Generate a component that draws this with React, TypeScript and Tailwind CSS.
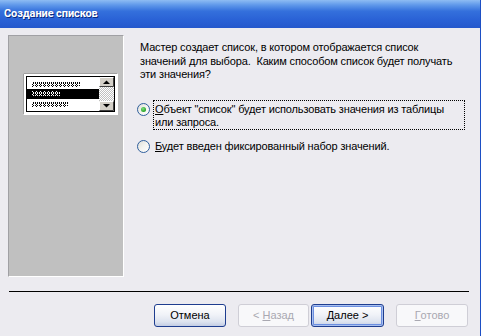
import React from "react";

function Radio({ checked }: { checked?: boolean }) {
  return (
    <svg width="13" height="13" viewBox="0 0 13 13" className="shrink-0">
      <defs>
        <linearGradient id={checked ? "rg1" : "rg2"} x1="0" y1="0" x2="1" y2="1">
          <stop offset="0" stopColor="#dcdcd6" />
          <stop offset="0.5" stopColor="#f4f4f0" />
          <stop offset="1" stopColor="#ffffff" />
        </linearGradient>
        <radialGradient id={checked ? "dg1" : "dg2"} cx="0.4" cy="0.35" r="0.7">
          <stop offset="0" stopColor="#7fe07f" />
          <stop offset="1" stopColor="#1a9a1a" />
        </radialGradient>
      </defs>
      <circle cx="6.5" cy="6.5" r="6" fill={`url(#${checked ? "rg1" : "rg2"})`} stroke="#2f5e9c" strokeWidth="1" />
      {checked && <circle cx="6.5" cy="6.5" r="2.5" fill={`url(#dg1)`} />}
    </svg>
  );
}

function ListPic() {
  return (
    <svg width="95" height="42" viewBox="0 0 95 42" className="block">
      <defs>
        <pattern id="pb" patternUnits="userSpaceOnUse" width="4" height="5">
          <rect x="0" y="0" width="1" height="1" fill="#000" />
          <rect x="2" y="0" width="1" height="1" fill="#000" />
          <rect x="1" y="1" width="1" height="1" fill="#000" />
          <rect x="0" y="2" width="1" height="1" fill="#000" />
          <rect x="2" y="2" width="1" height="1" fill="#000" />
          <rect x="1" y="3" width="1" height="1" fill="#000" />
          <rect x="0" y="4" width="1" height="1" fill="#000" />
          <rect x="2" y="4" width="1" height="1" fill="#000" />
        </pattern>
        <pattern id="pw" patternUnits="userSpaceOnUse" width="4" height="5">
          <rect x="0" y="0" width="1" height="1" fill="#fff" />
          <rect x="2" y="0" width="1" height="1" fill="#fff" />
          <rect x="1" y="1" width="1" height="1" fill="#fff" />
          <rect x="0" y="2" width="1" height="1" fill="#fff" />
          <rect x="2" y="2" width="1" height="1" fill="#fff" />
          <rect x="1" y="3" width="1" height="1" fill="#fff" />
          <rect x="0" y="4" width="1" height="1" fill="#fff" />
          <rect x="2" y="4" width="1" height="1" fill="#fff" />
        </pattern>
        <pattern id="chk" patternUnits="userSpaceOnUse" width="2" height="2">
          <rect x="0" y="0" width="2" height="2" fill="#c0c0c0" />
          <rect x="0" y="0" width="1" height="1" fill="#fff" />
          <rect x="1" y="1" width="1" height="1" fill="#fff" />
        </pattern>
      </defs>
      <rect x="0" y="0" width="95" height="42" fill="#fff" />
      <path d="M0.5 41.5 V0.5 H94.5" stroke="#a0a0a0" fill="none" />
      <rect x="3.5" y="3.5" width="88" height="35" fill="#fff" stroke="#000" />
      <rect x="9" y="9" width="48" height="5" fill="url(#pb)" />
      <rect x="4" y="16" width="72" height="10" fill="#000" />
      <rect x="9" y="18" width="28" height="5" fill="url(#pw)" />
      <rect x="9" y="29" width="36" height="5" fill="url(#pb)" />
      <rect x="76" y="14" width="15" height="14" fill="url(#chk)" />
      <g>
        <rect x="76" y="4" width="15" height="10" fill="#d4d0c8" />
        <path d="M76.5 13.5 V4.5 H90.5" stroke="#fff" fill="none" />
        <path d="M76.5 13.5 H90.5 V4.5" stroke="#404040" fill="none" />
        <path d="M80 11 L83.5 7.5 L87 11 Z" fill="#000" />
      </g>
      <g>
        <rect x="76" y="28" width="15" height="10" fill="#d4d0c8" />
        <path d="M76.5 37.5 V28.5 H90.5" stroke="#fff" fill="none" />
        <path d="M76.5 37.5 H90.5 V28.5" stroke="#404040" fill="none" />
        <path d="M80 31 L83.5 34.5 L87 31 Z" fill="#000" />
      </g>
    </svg>
  );
}

function Btn({
  children,
  disabled,
  def,
  w,
}: {
  children: React.ReactNode;
  disabled?: boolean;
  def?: boolean;
  w: string;
}) {
  if (disabled) {
    return (
      <div
        className={`${w} h-[23px] flex items-center justify-center rounded-[3px] border border-[#cfced6] bg-[#f8f8fa] text-[#a9a8b1] text-[11px]`}
      >
        {children}
      </div>
    );
  }
  return (
    <div
      className={`${w} h-[23px] flex items-center justify-center rounded-[3px] border border-[#1e3d8f] bg-[linear-gradient(to_bottom,#ffffff_0%,#f1f3f8_45%,#dde3ef_80%,#c3cde4_100%)] text-black text-[11px] ${
        def ? "shadow-[inset_0_0_0_1px_#a9c0ef,inset_0_0_0_2px_#6b8ee0]" : ""
      }`}
    >
      {children}
    </div>
  );
}

export default function App() {
  return (
    <div className="w-[481px] h-[336px] bg-[#ECEBF0] flex flex-col border-r border-[#1d4fc4] font-['Liberation_Sans',Arial,sans-serif] overflow-hidden">
      <div className="h-[28px] shrink-0 flex items-center pl-[4px] bg-[linear-gradient(to_bottom,#8ebcf3_0%,#5f98ea_18%,#3470dc_40%,#2a62d6_70%,#2558cc_100%)]">
        <span className="text-white font-bold font-['Roboto',sans-serif] text-[11px] tracking-[-0.1px] [text-shadow:1px_1px_0_#0b2a80] mt-[1px]">
          Создание списков
        </span>
      </div>
      <div className="flex pt-[7px] pl-[8px]">
        <div className="w-[116px] h-[242px] bg-[#C0C0C0] border-t border-l border-[#a0a0a4] border-b border-r border-b-white border-r-white">
          <div className="ml-[14px] mt-[37px]">
            <ListPic />
          </div>
        </div>
        <div className="ml-[13px] flex flex-col text-[11px] text-black tracking-[-0.15px]">
          <p className="pl-[3px] mt-[6px] leading-[13.5px] whitespace-pre">
            {"Мастер создает список, в котором отображается список\nзначений для выбора.  Каким способом список будет получать\nэти значения?"}
          </p>
          <div className="flex items-start mt-[18px]">
            <div className="mt-[3px]">
              <Radio checked />
            </div>
            <div className="ml-[3px] w-[312px] border border-dotted border-black pt-[2px] pl-[1px] leading-[13px]">
              <span className="underline">О</span>бъект "список" будет использовать значения из таблицы
              <br />
              или запроса.
            </div>
          </div>
          <div className="flex items-start mt-[7px]">
            <div className="mt-[3px]">
              <Radio />
            </div>
            <div className="ml-[3px] border border-transparent pt-[2px] pl-[1px] leading-[13px]">
              <span className="underline">Б</span>удет введен фиксированный набор значений.
            </div>
          </div>
        </div>
      </div>
      <div className="mt-[14px] ml-[9px] w-[460px] h-px bg-black" />
      <div className="flex mt-[12px] pl-[154px]">
        <Btn w="w-[72px]">Отмена</Btn>
        <div className="ml-[12px]">
          <Btn w="w-[71px]" disabled>
            &lt; <span className="underline ml-[3px]">Н</span>азад
          </Btn>
        </div>
        <div className="ml-[2px]">
          <Btn w="w-[73px]" def>
            <span className="underline">Д</span>алее &gt;
          </Btn>
        </div>
        <div className="ml-[12px]">
          <Btn w="w-[72px]" disabled>
            <span className="underline">Г</span>отово
          </Btn>
        </div>
      </div>
    </div>
  );
}
